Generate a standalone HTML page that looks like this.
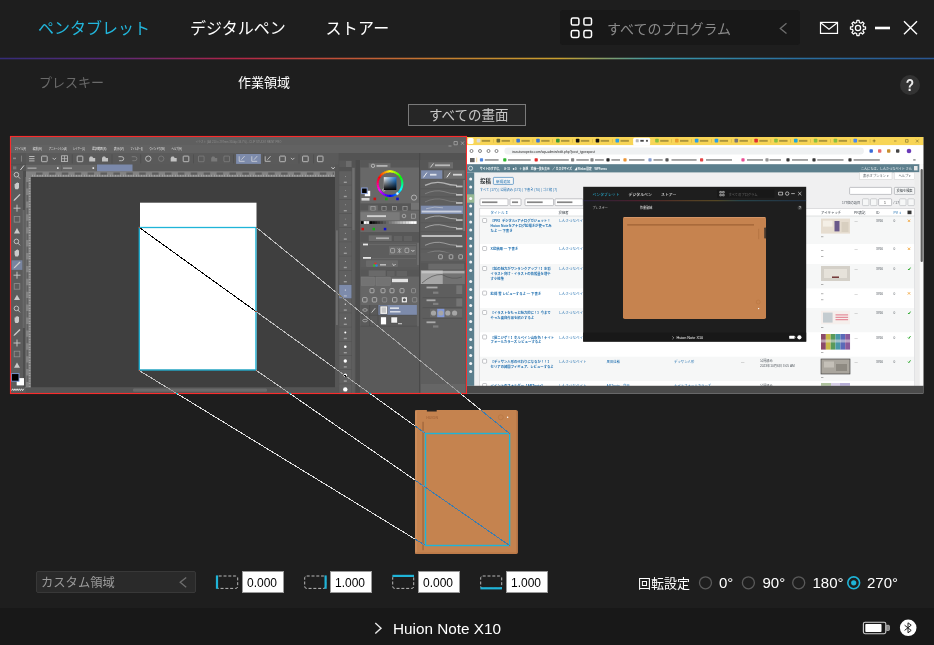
<!DOCTYPE html>
<html lang="ja"><head><meta charset="utf-8"><title>Huion</title>
<style>
*{box-sizing:border-box;margin:0;padding:0}
html,body{width:934px;height:645px;overflow:hidden;background:#1e1e1e}
body{position:relative;font-family:"Liberation Sans","Noto Sans CJK JP",sans-serif;color:#fff}
.abs{position:absolute}
.t{position:absolute;white-space:nowrap;line-height:1}
#grad{left:0;top:58px;width:934px;height:1px;background:linear-gradient(90deg,#352c78 0%,#5a2a78 12%,#b02448 25%,#c05038 36%,#c48030 48%,#c8a030 60%,#3a98a8 70%,#2a70a0 85%,#2a5590 100%)}
#grad2{left:0;top:57px;width:934px;height:3px;opacity:.28;background:linear-gradient(90deg,#352c78 0%,#5a2a78 12%,#b02448 25%,#c05038 36%,#c48030 48%,#c8a030 60%,#3a98a8 70%,#2a70a0 85%,#2a5590 100%)}
#prog{left:560px;top:10px;width:240px;height:35px;background:#181818;border-radius:3px}
#foot{left:0;top:608px;width:934px;height:37px;background:#181818}
.inp{position:absolute;top:571px;width:42px;height:22px;background:#fff;border:1px solid #9a9a9a;color:#000;font-size:12px;line-height:23px;text-align:center;padding-right:2px}
</style></head><body>
<svg class="abs" style="left:0;top:0" width="934" height="645" viewBox="0 0 934 645" font-family="Liberation Sans, Noto Sans CJK JP, sans-serif">
<rect x="10" y="136" width="457" height="258" fill="#5b5b5b" />
<rect x="11" y="137" width="455" height="8" fill="#5f5f5f" />
<rect x="11" y="145" width="455" height="8" fill="#626262" />
<rect x="11" y="153" width="455" height="11.5" fill="#5a5a5a" />
<rect x="11" y="153" width="15" height="18" fill="#565656" />
<rect x="21.2" y="155.6" width="0.8" height="6" fill="#8a8a8a" />
<rect x="13" y="157.6" width="3" height="1.6" fill="#888" />
<path d="M11 164.4 H26" stroke="#4c4c4c" stroke-width=".5"/>
<path d="M20.4 170 l3.6 -4.6" stroke="#e0e0e0" stroke-width=".9"/>
<rect x="13" y="166.4" width="3.4" height="3" fill="#777" />
<rect x="11" y="171" width="12" height="216" fill="#5c5c5c" />
<rect x="23" y="171" width="3" height="216" fill="#4e4e4e" />
<rect x="26" y="164.5" width="309" height="7" fill="#595959" />
<rect x="26" y="164.8" width="35" height="6.5" fill="#666" />
<rect x="61.6" y="164.8" width="35" height="6.5" fill="#666" />
<rect x="27.5" y="167.4" width="9" height="1.6" fill="#ddd" opacity=".45"/>
<rect x="63" y="167.4" width="9" height="1.6" fill="#ddd" opacity=".45"/>
<rect x="98.5" y="167.4" width="9" height="1.6" fill="#ddd" opacity=".45"/>
<rect x="57" y="167.2" width="1.6" height="1.8" fill="#fff" opacity=".8"/>
<rect x="92.5" y="167.2" width="1.6" height="1.8" fill="#fff" opacity=".8"/>
<rect x="128" y="167.2" width="1.6" height="1.8" fill="#fff" opacity=".8"/>
<path d="M331.5 167.2 l1.6 1.7 l1.6 -1.7" stroke="#eee" stroke-width=".8" fill="none"/>
<rect x="97" y="164.5" width="35.5" height="7" fill="#7b89ab" />
<rect x="26" y="171.3" width="309" height="5.7" fill="#828282" />
<rect x="25.6" y="177" width="5.2" height="211" fill="#828282" />
<rect x="31" y="177" width="304" height="210.5" fill="#3f3f3f" />
<rect x="335" y="164.5" width="3.6" height="229" fill="#565656" />
<rect x="336" y="230.4" width="1.9" height="94.6" fill="#6e6e6e" />
<rect x="26" y="387.5" width="313" height="5.5" fill="#555" />
<rect x="133" y="388.5" width="134" height="3.2" fill="#6a6a6a" rx="1.2"/>
<rect x="140" y="202.7" width="116.5" height="167" fill="#ffffff" />
<rect x="338.6" y="153" width="128" height="7" fill="#535353" />
<rect x="338.6" y="160" width="17" height="233" fill="#535353" />
<rect x="339.2" y="160.5" width="12.3" height="6.5" fill="#5a5a5a" />
<rect x="346" y="161" width="5.5" height="6" fill="#6c6c6c" />
<rect x="352" y="167.5" width="2.9" height="226" fill="#5e5e5e" />
<rect x="352.3" y="168" width="2.3" height="62" fill="#707070" />
<rect x="339.2" y="171.2" width="12.3" height="13.6" fill="#606060" />
<rect x="343.8" y="181.6" width="3" height="1.4" fill="#e8e8e8" opacity=".45"/>
<circle cx="345.3" cy="176.4" r="0.3" fill="#ffffff"/>
<rect x="339.2" y="185.4" width="12.3" height="13.6" fill="#606060" />
<rect x="343.8" y="195.8" width="3" height="1.4" fill="#e8e8e8" opacity=".45"/>
<circle cx="345.3" cy="190.6" r="0.3" fill="#ffffff"/>
<rect x="339.2" y="199.6" width="12.3" height="13.6" fill="#606060" />
<rect x="343.8" y="210" width="3" height="1.4" fill="#e8e8e8" opacity=".45"/>
<circle cx="345.3" cy="204.8" r="0.35" fill="#ffffff"/>
<rect x="339.2" y="213.8" width="12.3" height="13.6" fill="#606060" />
<rect x="343.8" y="224.2" width="3" height="1.4" fill="#e8e8e8" opacity=".45"/>
<circle cx="345.3" cy="219" r="0.35" fill="#ffffff"/>
<rect x="339.2" y="228" width="12.3" height="13.6" fill="#606060" />
<rect x="343.8" y="238.4" width="3" height="1.4" fill="#e8e8e8" opacity=".45"/>
<circle cx="345.3" cy="233.2" r="0.4" fill="#ffffff"/>
<rect x="339.2" y="242.2" width="12.3" height="13.6" fill="#606060" />
<rect x="343.8" y="252.6" width="3" height="1.4" fill="#e8e8e8" opacity=".45"/>
<circle cx="345.3" cy="247.4" r="0.4" fill="#ffffff"/>
<rect x="339.2" y="256.4" width="12.3" height="13.6" fill="#606060" />
<rect x="343.8" y="266.8" width="3" height="1.4" fill="#e8e8e8" opacity=".45"/>
<circle cx="345.3" cy="261.6" r="0.45" fill="#ffffff"/>
<rect x="339.2" y="270.6" width="12.3" height="13.6" fill="#606060" />
<rect x="343.8" y="281" width="3" height="1.4" fill="#e8e8e8" opacity=".45"/>
<circle cx="345.3" cy="275.8" r="0.5" fill="#ffffff"/>
<rect x="339.2" y="284.8" width="12.3" height="13.6" fill="#7d8bab" />
<rect x="343.8" y="295.2" width="3" height="1.4" fill="#e8e8e8" opacity=".45"/>
<circle cx="345.3" cy="290" r="0.55" fill="#ffffff"/>
<rect x="339.2" y="299" width="12.3" height="13.6" fill="#606060" />
<rect x="343.8" y="309.4" width="3" height="1.4" fill="#e8e8e8" opacity=".45"/>
<circle cx="345.3" cy="304.2" r="0.6" fill="#ffffff"/>
<rect x="339.2" y="313.2" width="12.3" height="13.6" fill="#606060" />
<rect x="343.8" y="323.6" width="3" height="1.4" fill="#e8e8e8" opacity=".45"/>
<circle cx="345.3" cy="318.4" r="0.8" fill="#ffffff"/>
<rect x="339.2" y="327.4" width="12.3" height="13.6" fill="#606060" />
<rect x="343.8" y="337.8" width="3" height="1.4" fill="#e8e8e8" opacity=".45"/>
<circle cx="345.3" cy="332.6" r="1" fill="#ffffff"/>
<rect x="339.2" y="341.6" width="12.3" height="13.6" fill="#606060" />
<rect x="343.8" y="352" width="3" height="1.4" fill="#e8e8e8" opacity=".45"/>
<circle cx="345.3" cy="346.8" r="1.3" fill="#ffffff"/>
<rect x="339.2" y="355.8" width="12.3" height="13.6" fill="#606060" />
<rect x="343.8" y="366.2" width="3" height="1.4" fill="#e8e8e8" opacity=".45"/>
<circle cx="345.3" cy="361" r="1.7" fill="#ffffff"/>
<rect x="339.2" y="370" width="12.3" height="13.6" fill="#606060" />
<rect x="343.8" y="380.4" width="3" height="1.4" fill="#e8e8e8" opacity=".45"/>
<circle cx="345.3" cy="375.2" r="1.7" fill="#ffffff"/>
<rect x="339.2" y="384.2" width="12.3" height="8.6" fill="#606060" />
<circle cx="345.3" cy="389.4" r="2.2" fill="#ffffff"/>
<rect x="355.5" y="160" width="4.5" height="233" fill="#4c4c4c" />
<rect x="360" y="160" width="59" height="233" fill="#5a5a5a" />
<rect x="419" y="153" width="1.3" height="240" fill="#4a4a4a" />
<rect x="420.3" y="160" width="45.7" height="233" fill="#5a5a5a" />
<rect x="360.5" y="167" width="58.5" height="36.6" fill="#686868" />
<rect x="360.5" y="160" width="58.5" height="7.5" fill="#575757" />
<rect x="368.7" y="163.2" width="21.8" height="5.2" fill="#6c6c6c" />
<rect x="376.5" y="165" width="11" height="1.8" fill="#eee" opacity=".55"/>
<circle cx="373" cy="165.8" r="1.7" fill="none" stroke="#e0e0e0" stroke-width=".6"/>
<g transform="translate(390,183.6)">
<path d="M-11.24 -5.00 A12.3 12.3 0 0 1 -9.95 -7.23" stroke="#ff0000" stroke-width="2.1" fill="none"/>
<path d="M-10.20 -6.88 A12.3 12.3 0 0 1 -8.54 -8.85" stroke="#ff2a00" stroke-width="2.1" fill="none"/>
<path d="M-8.85 -8.54 A12.3 12.3 0 0 1 -6.88 -10.20" stroke="#ff5400" stroke-width="2.1" fill="none"/>
<path d="M-7.23 -9.95 A12.3 12.3 0 0 1 -5.00 -11.24" stroke="#ff7f00" stroke-width="2.1" fill="none"/>
<path d="M-5.39 -11.06 A12.3 12.3 0 0 1 -2.98 -11.93" stroke="#ffaa00" stroke-width="2.1" fill="none"/>
<path d="M-3.39 -11.82 A12.3 12.3 0 0 1 -0.86 -12.27" stroke="#ffd400" stroke-width="2.1" fill="none"/>
<path d="M-1.29 -12.23 A12.3 12.3 0 0 1 1.29 -12.23" stroke="#ffff00" stroke-width="2.1" fill="none"/>
<path d="M0.86 -12.27 A12.3 12.3 0 0 1 3.39 -11.82" stroke="#d4ff00" stroke-width="2.1" fill="none"/>
<path d="M2.98 -11.93 A12.3 12.3 0 0 1 5.39 -11.06" stroke="#aaff00" stroke-width="2.1" fill="none"/>
<path d="M5.00 -11.24 A12.3 12.3 0 0 1 7.23 -9.95" stroke="#7fff00" stroke-width="2.1" fill="none"/>
<path d="M6.88 -10.20 A12.3 12.3 0 0 1 8.85 -8.54" stroke="#54ff00" stroke-width="2.1" fill="none"/>
<path d="M8.54 -8.85 A12.3 12.3 0 0 1 10.20 -6.88" stroke="#2aff00" stroke-width="2.1" fill="none"/>
<path d="M9.95 -7.23 A12.3 12.3 0 0 1 11.24 -5.00" stroke="#00ff00" stroke-width="2.1" fill="none"/>
<path d="M11.06 -5.39 A12.3 12.3 0 0 1 11.93 -2.98" stroke="#00ff2a" stroke-width="2.1" fill="none"/>
<path d="M11.82 -3.39 A12.3 12.3 0 0 1 12.27 -0.86" stroke="#00ff55" stroke-width="2.1" fill="none"/>
<path d="M12.23 -1.29 A12.3 12.3 0 0 1 12.23 1.29" stroke="#00ff7f" stroke-width="2.1" fill="none"/>
<path d="M12.27 0.86 A12.3 12.3 0 0 1 11.82 3.39" stroke="#00ffa9" stroke-width="2.1" fill="none"/>
<path d="M11.93 2.98 A12.3 12.3 0 0 1 11.06 5.39" stroke="#00ffd4" stroke-width="2.1" fill="none"/>
<path d="M11.24 5.00 A12.3 12.3 0 0 1 9.95 7.23" stroke="#00ffff" stroke-width="2.1" fill="none"/>
<path d="M10.20 6.88 A12.3 12.3 0 0 1 8.54 8.85" stroke="#00d4ff" stroke-width="2.1" fill="none"/>
<path d="M8.85 8.54 A12.3 12.3 0 0 1 6.88 10.20" stroke="#00a9ff" stroke-width="2.1" fill="none"/>
<path d="M7.23 9.95 A12.3 12.3 0 0 1 5.00 11.24" stroke="#007fff" stroke-width="2.1" fill="none"/>
<path d="M5.39 11.06 A12.3 12.3 0 0 1 2.98 11.93" stroke="#0054ff" stroke-width="2.1" fill="none"/>
<path d="M3.39 11.82 A12.3 12.3 0 0 1 0.86 12.27" stroke="#002aff" stroke-width="2.1" fill="none"/>
<path d="M1.29 12.23 A12.3 12.3 0 0 1 -1.29 12.23" stroke="#0000ff" stroke-width="2.1" fill="none"/>
<path d="M-0.86 12.27 A12.3 12.3 0 0 1 -3.39 11.82" stroke="#2a00ff" stroke-width="2.1" fill="none"/>
<path d="M-2.98 11.93 A12.3 12.3 0 0 1 -5.39 11.06" stroke="#5400ff" stroke-width="2.1" fill="none"/>
<path d="M-5.00 11.24 A12.3 12.3 0 0 1 -7.23 9.95" stroke="#7f00ff" stroke-width="2.1" fill="none"/>
<path d="M-6.88 10.20 A12.3 12.3 0 0 1 -8.85 8.54" stroke="#aa00ff" stroke-width="2.1" fill="none"/>
<path d="M-8.54 8.85 A12.3 12.3 0 0 1 -10.20 6.88" stroke="#d400ff" stroke-width="2.1" fill="none"/>
<path d="M-9.95 7.23 A12.3 12.3 0 0 1 -11.24 5.00" stroke="#ff00ff" stroke-width="2.1" fill="none"/>
<path d="M-11.06 5.39 A12.3 12.3 0 0 1 -11.93 2.98" stroke="#ff00d4" stroke-width="2.1" fill="none"/>
<path d="M-11.82 3.39 A12.3 12.3 0 0 1 -12.27 0.86" stroke="#ff00aa" stroke-width="2.1" fill="none"/>
<path d="M-12.23 1.29 A12.3 12.3 0 0 1 -12.23 -1.29" stroke="#ff007f" stroke-width="2.1" fill="none"/>
<path d="M-12.27 -0.86 A12.3 12.3 0 0 1 -11.82 -3.39" stroke="#ff0055" stroke-width="2.1" fill="none"/>
<path d="M-11.93 -2.98 A12.3 12.3 0 0 1 -11.06 -5.39" stroke="#ff002a" stroke-width="2.1" fill="none"/>
<circle cx="-6.2" cy="6.4" r="1.2" fill="none" stroke="#eee" stroke-width=".5"/><circle cx="7.4" cy="10" r="1.1" fill="#dff" stroke="#fff" stroke-width=".4"/>
</g>
<defs><linearGradient id="cg1" x1="0" x2="1" y1="0" y2="0"><stop offset="0" stop-color="#fff"/><stop offset="1" stop-color="#1a7fe0"/></linearGradient><linearGradient id="cg2" x1="0" x2="0" y1="0" y2="1"><stop offset="0" stop-color="#000" stop-opacity="0"/><stop offset="1" stop-color="#000"/></linearGradient></defs>
<rect x="383.8" y="177.2" width="12.6" height="12.8" fill="url(#cg1)" />
<rect x="383.8" y="177.2" width="12.6" height="12.8" fill="url(#cg2)" />
<rect x="364.8" y="190.8" width="5.4" height="5.4" fill="#fff" />
<rect x="361.6" y="188" width="5.6" height="5.6" fill="#000" stroke="#8aa0d8" stroke-width="1"/>
<rect x="361.5" y="198" width="8" height="2.6" fill="#d8d8d8" />
<rect x="373.5" y="197.6" width="2.6" height="2.6" fill="#d01010" />
<rect x="385" y="197.6" width="2.6" height="2.6" fill="#10b010" />
<rect x="396.2" y="197.6" width="2.6" height="2.6" fill="#1010d0" />
<circle cx="414" cy="197.6" r="2.6" fill="none" stroke="#ccc" stroke-width=".7"/>
<rect x="360.5" y="203.6" width="58.5" height="8.4" fill="#575757" />
<rect x="411" y="202.8" width="8" height="7" fill="#747474" />
<rect x="368.3" y="205.4" width="9.5" height="6.4" fill="#6c6c6c" />
<rect x="370.9" y="206.6" width="4.2" height="3.8" fill="none" stroke="#c0c0c0" stroke-width=".6" opacity=".8"/>
<rect x="381.9" y="206.6" width="4.2" height="3.8" fill="none" stroke="#c0c0c0" stroke-width=".6" opacity=".8"/>
<rect x="392.4" y="206.6" width="4.2" height="3.8" fill="none" stroke="#c0c0c0" stroke-width=".6" opacity=".8"/>
<rect x="402.9" y="206.6" width="4.2" height="3.8" fill="none" stroke="#c0c0c0" stroke-width=".6" opacity=".8"/>
<rect x="360.5" y="210.5" width="58.5" height="21.5" fill="#686868" />
<rect x="360.5" y="212.2" width="39.2" height="8" fill="#7a7a7a" />
<rect x="367" y="215.2" width="19" height="1.9" fill="#fff" opacity=".65"/>
<circle cx="404" cy="216" r="1.8" fill="none" stroke="#c8c8c8" stroke-width=".6"/>
<rect x="411.5" y="214" width="4" height="4.2" fill="none" stroke="#b0b0b0" stroke-width=".6"/>
<rect x="361" y="221.2" width="2.8" height="2.7" fill="#000" />
<rect x="363.78" y="221.2" width="2.8" height="2.7" fill="#fff" />
<rect x="366.56" y="221.2" width="2.8" height="2.7" fill="#eee" />
<rect x="369.34" y="221.2" width="2.8" height="2.7" fill="#000" />
<rect x="372.12" y="221.2" width="2.8" height="2.7" fill="#111" />
<rect x="374.9" y="221.2" width="2.8" height="2.7" fill="#222" />
<rect x="377.68" y="221.2" width="2.8" height="2.7" fill="#333" />
<rect x="380.46" y="221.2" width="2.8" height="2.7" fill="#444" />
<rect x="383.24" y="221.2" width="2.8" height="2.7" fill="#555" />
<rect x="386.02" y="221.2" width="2.8" height="2.7" fill="#666" />
<rect x="388.8" y="221.2" width="2.8" height="2.7" fill="#777" />
<rect x="391.58" y="221.2" width="2.8" height="2.7" fill="#888" />
<rect x="394.36" y="221.2" width="2.8" height="2.7" fill="#999" />
<rect x="397.14" y="221.2" width="2.8" height="2.7" fill="#aaa" />
<rect x="399.92" y="221.2" width="2.8" height="2.7" fill="#bbb" />
<rect x="402.7" y="221.2" width="2.8" height="2.7" fill="#ccc" />
<rect x="405.48" y="221.2" width="2.8" height="2.7" fill="#ddd" />
<rect x="408.26" y="221.2" width="2.8" height="2.7" fill="#eee" />
<rect x="411.04" y="221.2" width="2.8" height="2.7" fill="#fff" />
<rect x="413.82" y="221.2" width="2.8" height="2.7" fill="#fff" />
<rect x="361.5" y="227.8" width="2.5" height="2.5" fill="#d01010" />
<rect x="372.5" y="227.8" width="2.5" height="2.5" fill="#10b010" />
<rect x="383.8" y="227.8" width="2.5" height="2.5" fill="#1010d0" />
<rect x="360.5" y="232" width="58.5" height="10" fill="#575757" />
<rect x="368.7" y="235.4" width="23" height="5.6" fill="#6c6c6c" />
<rect x="376" y="237.4" width="13" height="1.7" fill="#eee" opacity=".5"/>
<rect x="394" y="236" width="8" height="5" fill="#626262" />
<rect x="404" y="236" width="8" height="5" fill="#626262" />
<rect x="360.5" y="242" width="58.5" height="25" fill="#5d5d5d" />
<rect x="363" y="243.6" width="5" height="1.8" fill="#fff" opacity=".85"/>
<rect x="369" y="244.6" width="47" height="0.4" fill="#7a7a7a" />
<rect x="389" y="246.2" width="27" height="8.8" fill="#6c6c6c" />
<rect x="390.6" y="248.4" width="4" height="4.4" rx=".9" fill="none" stroke="#bdbdbd" stroke-width=".7"/><path d="M397.6 248.4 l3.6 4.4 m0 -4.4 l-3.6 4.4 M399.4 248 v5.2" stroke="#bdbdbd" stroke-width=".6"/><rect x="405" y="248.2" width="3.8" height="4.4" rx="1" fill="none" stroke="#bdbdbd" stroke-width=".7"/><path d="M411.4 250 l1.5 1.5 l1.5 -1.5" stroke="#e8e8e8" stroke-width=".8" fill="none"/>
<rect x="363" y="257" width="8" height="1.8" fill="#fff" opacity=".85"/>
<rect x="372" y="258" width="44" height="0.4" fill="#7a7a7a" />
<rect x="366" y="260.2" width="32" height="6.8" fill="#6a6a6a" rx="1"/>
<circle cx="375.4" cy="263.6" r="1.2" fill="#e03030"/><circle cx="374.3" cy="265.5" r="1.2" fill="#30c030"/><circle cx="376.5" cy="265.5" r="1.2" fill="#3080e0"/>
<rect x="380" y="264" width="6" height="1.6" fill="#ddd" opacity=".7"/>
<path d="M392.4 264 l1.6 1.6 l1.6 -1.6" stroke="#eee" stroke-width=".8" fill="none"/>
<rect x="417.2" y="243" width="1.6" height="22" fill="#727272" />
<rect x="360.5" y="269.6" width="58.5" height="7" fill="#575757" />
<rect x="368.7" y="270.4" width="17" height="5.6" fill="#6a6a6a" />
<rect x="387" y="271" width="7.6" height="5" fill="#626262" />
<rect x="396.5" y="271" width="10.5" height="5" fill="#626262" />
<rect x="360.5" y="276.6" width="58.5" height="49.6" fill="#666666" />
<rect x="361.3" y="277" width="13.2" height="8.6" fill="#737373" stroke="#808080" stroke-width=".4"/>
<rect x="376" y="277" width="14.4" height="8.6" fill="#737373" stroke="#808080" stroke-width=".4"/>
<rect x="392" y="278.8" width="16" height="3.4" fill="#e2e2e2" />
<rect x="370" y="288.6" width="4" height="4.2" rx=".8" fill="none" stroke="#c4c4c4" stroke-width=".8" opacity="0.9"/>
<rect x="381" y="288.6" width="4" height="4.2" rx=".8" fill="none" stroke="#c4c4c4" stroke-width=".8" opacity="0.9"/>
<rect x="390" y="288.6" width="4" height="4.2" rx=".8" fill="none" stroke="#c4c4c4" stroke-width=".8" opacity="0.9"/>
<rect x="400" y="288.6" width="4" height="4.2" rx=".8" fill="none" stroke="#c4c4c4" stroke-width=".8" opacity="0.9"/>
<rect x="411.5" y="288.6" width="4" height="4.2" rx=".8" fill="none" stroke="#c4c4c4" stroke-width=".8" opacity="0.5"/>
<rect x="362.6" y="297.6" width="4.4" height="4.4" rx=".8" fill="none" stroke="#c4c4c4" stroke-width=".8" opacity="0.9"/>
<rect x="372.3" y="297.6" width="4.4" height="4.4" rx=".8" fill="none" stroke="#c4c4c4" stroke-width=".8" opacity="0.9"/>
<rect x="382.3" y="297.6" width="4.4" height="4.4" rx=".8" fill="none" stroke="#c4c4c4" stroke-width=".8" opacity="0.45"/>
<rect x="392.5" y="297.6" width="4.4" height="4.4" rx=".8" fill="none" stroke="#c4c4c4" stroke-width=".8" opacity="0.9"/>
<rect x="401.8" y="297.2" width="5.2" height="5.2" fill="#e8e8e8" />
<circle cx="404.4" cy="299.8" r="1.5" fill="#555"/>
<rect x="412.4" y="297.6" width="4.4" height="4.4" rx=".8" fill="none" stroke="#c4c4c4" stroke-width=".8" opacity="0.45"/>
<rect x="360.5" y="305" width="56.4" height="21.2" fill="#5a5a5a" />
<rect x="378.2" y="305" width="38.7" height="10.1" fill="#7d8bab" />
<rect x="380" y="306" width="7.6" height="8.2" fill="#f2f2f2" stroke="#333" stroke-width=".5"/>
<rect x="381.6" y="307.4" width="4.4" height="5.4" fill="#c8c8c8" />
<rect x="390" y="307.4" width="9" height="1.5" fill="#fff" opacity=".8"/>
<rect x="390" y="311" width="10.5" height="1.5" fill="#fff" opacity=".7"/>
<rect x="380.9" y="317.2" width="5.2" height="7.2" fill="#ffffff" />
<rect x="391" y="317" width="6.4" height="6" fill="#f2f2f2" stroke="#444" stroke-width=".5"/>
<rect x="398" y="323" width="4" height="1.3" fill="#ddd" opacity=".7"/>
<path d="M360.5 315.2 H416.9 M360.5 326.2 H416.9 M369.6 305 V326 M378 305 V326" stroke="#484848" stroke-width=".5"/>
<ellipse cx="365" cy="310" rx="2.3" ry="1.3" fill="none" stroke="#c8c8c8" stroke-width=".6"/>
<ellipse cx="365" cy="320.6" rx="2.3" ry="1.3" fill="none" stroke="#c8c8c8" stroke-width=".6"/>
<path d="M371.6 312.6 l3.6 -4.4" stroke="#ddd" stroke-width=".8"/>
<rect x="420.3" y="160" width="45.7" height="10" fill="#575757" />
<rect x="428.4" y="162.2" width="24.6" height="6.2" fill="#6c6c6c" />
<rect x="435" y="164.4" width="15" height="1.8" fill="#eee" opacity=".6"/>
<path d="M430.5 167.4 l3 -4" stroke="#e4e4e4" stroke-width=".8"/>
<rect x="421.1" y="170.3" width="21.2" height="8.5" fill="#7d8bab" />
<rect x="443.9" y="170.3" width="20.8" height="8.5" fill="#6e6e6e" />
<path d="M423.5 177.4 l3.4 -4.8 M446.8 177.4 l3.4 -4.8" stroke="#f0f0f0" stroke-width="1"/>
<rect x="430" y="173.8" width="6.5" height="1.8" fill="#fff" opacity=".75"/>
<rect x="453" y="173.8" width="9" height="1.8" fill="#fff" opacity=".7"/>
<rect x="420.8" y="179.6" width="44.2" height="78" fill="#5e5e5e" />
<path d="M425 185.4 q10 -4.6 19 -2.2 q6 2.2 13 2.2" stroke="#ececec" stroke-width="1.3" fill="none" opacity="0.6"/>
<rect x="456" y="185.6" width="6.5" height="1.7" fill="#fff" opacity=".6"/>
<path d="M420.8 188.8 H463" stroke="#525252" stroke-width=".5"/>
<path d="M425 193.8 q10 -4.6 19 -2.2 q6 2.2 13 2.2" stroke="#ececec" stroke-width="0.6" fill="none" opacity="0.4"/>
<rect x="456" y="194" width="6.5" height="1.7" fill="#fff" opacity=".6"/>
<path d="M420.8 196.9 H463" stroke="#525252" stroke-width=".5"/>
<path d="M425 201.9 q10 -4.6 19 -2.2 q6 2.2 13 2.2" stroke="#ececec" stroke-width="0.5" fill="none" opacity="0.35"/>
<rect x="456" y="202.1" width="6.5" height="1.7" fill="#fff" opacity=".6"/>
<path d="M420.8 205.6 H463" stroke="#525252" stroke-width=".5"/>
<rect x="420.8" y="205.6" width="42.4" height="8.4" fill="#7d8bab" />
<rect x="421.6" y="210.6" width="40" height="1.9" fill="#fff" opacity=".6"/>
<path d="M426 208.8 q9 -3 17 -1" stroke="#e8e8e8" stroke-width=".7" fill="none" opacity=".6"/>
<path d="M425 219 q10 -4.6 19 -2.2 q6 2.2 13 2.2" stroke="#ececec" stroke-width="0.9" fill="none" opacity="0.55"/>
<rect x="456" y="219.2" width="6.5" height="1.7" fill="#fff" opacity=".6"/>
<path d="M420.8 222.7 H463" stroke="#525252" stroke-width=".5"/>
<path d="M425 227.7 q10 -4.6 19 -2.2 q6 2.2 13 2.2" stroke="#ececec" stroke-width="0.9" fill="none" opacity="0.55"/>
<rect x="456" y="227.9" width="6.5" height="1.7" fill="#fff" opacity=".6"/>
<path d="M420.8 231.8 H463" stroke="#525252" stroke-width=".5"/>
<rect x="421.6" y="235" width="40.5" height="2" fill="#fff" opacity=".6"/>
<path d="M425 245.3 q10 -4.6 19 -2.2 q6 2.2 13 2.2" stroke="#ececec" stroke-width="0.8" fill="none" opacity="0.55"/>
<rect x="456" y="245.5" width="6.5" height="1.7" fill="#fff" opacity=".6"/>
<path d="M420.8 249 H463" stroke="#525252" stroke-width=".5"/>
<path d="M425 254 q10 -4.6 19 -2.2 q6 2.2 13 2.2" stroke="#ececec" stroke-width="0.6" fill="none" opacity="0.4"/>
<rect x="456" y="254.2" width="6.5" height="1.7" fill="#fff" opacity=".6"/>
<path d="M420.8 257.4 H463" stroke="#525252" stroke-width=".5"/>
<rect x="463.4" y="180" width="1.5" height="51" fill="#808080" />
<rect x="420.8" y="252.6" width="44.2" height="8.4" fill="#606060" />
<rect x="438.7" y="254.8" width="3.6" height="4" rx=".6" fill="none" stroke="#c8c8c8" stroke-width=".7"/>
<rect x="449.2" y="254.8" width="3.6" height="4" rx=".6" fill="none" stroke="#c8c8c8" stroke-width=".7"/>
<rect x="458.8" y="254.8" width="3.6" height="4" rx=".6" fill="none" stroke="#c8c8c8" stroke-width=".7"/>
<rect x="420.3" y="263" width="45.7" height="7" fill="#575757" />
<rect x="420.8" y="284" width="44.5" height="100" fill="#5e5e5e" />
<rect x="420.8" y="270.3" width="22.1" height="13.7" fill="#a6a6a6" />
<rect x="442.9" y="270.3" width="22" height="13.7" fill="#727272" />
<rect x="421.5" y="271" width="43" height="2.4" fill="#d8d8d8" opacity=".55"/>
<path d="M422 283 q10 -9 20 -8.5 q10 6 20 2.5" stroke="#555" stroke-width=".7" fill="none"/>
<rect x="428.3" y="263.6" width="36" height="6" fill="#6a6a6a" />
<rect x="456.3" y="285.4" width="5.9" height="8.6" fill="#747474" />
<rect x="456.3" y="298.4" width="5.9" height="8" fill="#747474" />
<path d="M422.5 297.6 H462.5" stroke="#4c4c4c" stroke-width=".5"/>
<path d="M422.5 307.6 H462.5" stroke="#4c4c4c" stroke-width=".5"/>
<path d="M422.5 318.4 H462.5" stroke="#4c4c4c" stroke-width=".5"/>
<rect x="426.5" y="286.6" width="11" height="1.8" fill="#e0e0e0" opacity=".6"/>
<rect x="426.5" y="299.4" width="9" height="1.8" fill="#e0e0e0" opacity=".6"/>
<rect x="426.5" y="321.4" width="9" height="1.8" fill="#e0e0e0" opacity=".6"/>
<rect x="433" y="291.6" width="5.4" height="2.2" fill="#808080" />
<rect x="433" y="302.8" width="5.4" height="2.2" fill="#808080" />
<rect x="433" y="325.4" width="5.4" height="2.2" fill="#808080" />
<rect x="430" y="308.8" width="32" height="8.4" fill="#6a6a6a" />
<rect x="437.2" y="308.8" width="7.2" height="8.4" fill="#8298d8" />
<circle cx="433.5" cy="313" r="2.6" fill="#a6a6a6"/>
<circle cx="440.8" cy="313" r="2.6" fill="#a6a6a6"/>
<circle cx="447.8" cy="313" r="2.6" fill="#a6a6a6"/>
<circle cx="454.6" cy="313" r="2.6" fill="#a6a6a6"/>
<rect x="420.8" y="384" width="44.5" height="9" fill="#666666" />
<text x="14.4" y="150.1" font-size="3.6" fill="#e6e6e6" textLength="11.6" lengthAdjust="spacingAndGlyphs">ファイル(F)</text>
<text x="32.7" y="150.1" font-size="3.6" fill="#e6e6e6" textLength="9.3" lengthAdjust="spacingAndGlyphs">編集(E)</text>
<text x="49" y="150.1" font-size="3.6" fill="#e6e6e6" textLength="17.7" lengthAdjust="spacingAndGlyphs">アニメーション(A)</text>
<text x="73" y="150.1" font-size="3.6" fill="#e6e6e6" textLength="12" lengthAdjust="spacingAndGlyphs">レイヤー(L)</text>
<text x="92" y="150.1" font-size="3.6" fill="#e6e6e6" textLength="14.4" lengthAdjust="spacingAndGlyphs">選択範囲(S)</text>
<text x="113.7" y="150.1" font-size="3.6" fill="#e6e6e6" textLength="10.1" lengthAdjust="spacingAndGlyphs">表示(V)</text>
<text x="130.6" y="150.1" font-size="3.6" fill="#e6e6e6" textLength="12.3" lengthAdjust="spacingAndGlyphs">フィルター(I)</text>
<text x="149.4" y="150.1" font-size="3.6" fill="#e6e6e6" textLength="15.4" lengthAdjust="spacingAndGlyphs">ウィンドウ(W)</text>
<text x="171.4" y="150.1" font-size="3.6" fill="#e6e6e6" textLength="10.3" lengthAdjust="spacingAndGlyphs">ヘルプ(H)</text>
<text x="195.4" y="142.6" font-size="3" fill="#8c8c8c" textLength="86" lengthAdjust="spacingAndGlyphs">イラスト (A4 210 x 297mm 350dpi 34.7%) - CLIP STUDIO PAINT PRO</text>
<rect x="236.1" y="154" width="24.8" height="9.9" fill="#7d8bab" />
<g opacity=".8">
<path d="M29.1 156.5 h5.4 M29.1 158.7 h5.4 M29.1 160.9 h5.4" stroke="#e0e0e0" stroke-width=".9"/>
<rect x="41.6" y="156.1" width="5.6" height="5.6" rx=".6" fill="none" stroke="#dcdcdc" stroke-width=".9" opacity="1"/>
<path d="M52.6 157.9 l1.7 1.7 l1.7 -1.7" stroke="#e8e8e8" stroke-width=".9" fill="none"/>
<rect x="61.6" y="155.8" width="5.8" height="5.8" fill="none" stroke="#dcdcdc" stroke-width=".8"/><path d="M64.5 155.8 v5.8 M61.6 158.7 h5.8" stroke="#dcdcdc" stroke-width=".7"/>
<rect x="77.2" y="156.1" width="5.6" height="5.6" rx=".6" fill="none" stroke="#dcdcdc" stroke-width=".9" opacity="1"/>
<path d="M89.2 161.5 h6 v-3.4 h-2 l-1 -1.6 h-2 l-1 1.6z" fill="#dcdcdc" opacity="1"/>
<path d="M102 161.5 h6 v-3.4 h-2 l-1 -1.6 h-2 l-1 1.6z" fill="#dcdcdc" opacity="1"/>
<path d="M118.5 156.7 h3.2 a2 2 0 0 1 0 4 h-2.6" stroke="#dcdcdc" stroke-width=".9" fill="none" opacity="1"/>
<path d="M131.7 156.7 h3.2 a2 2 0 0 1 0 4 h-2.6" stroke="#dcdcdc" stroke-width=".9" fill="none" opacity="0.35"/>
<circle cx="148.3" cy="158.7" r="2.7" fill="none" stroke="#dcdcdc" stroke-width=".9" opacity="1"/>
<circle cx="161.2" cy="158.7" r="2.7" fill="none" stroke="#dcdcdc" stroke-width=".9" opacity="0.3"/>
<path d="M170.7 161.5 h6 v-3.4 h-2 l-1 -1.6 h-2 l-1 1.6z" fill="#dcdcdc" opacity="1"/>
<rect x="183.2" y="156.1" width="5.6" height="5.6" rx=".6" fill="none" stroke="#dcdcdc" stroke-width=".9" opacity="1"/>
<rect x="198.5" y="156.1" width="5.6" height="5.6" rx=".6" fill="none" stroke="#dcdcdc" stroke-width=".9" opacity="0.3"/>
<path d="M211.2 161.5 h6 v-3.4 h-2 l-1 -1.6 h-2 l-1 1.6z" fill="#dcdcdc" opacity="0.3"/>
<rect x="223.9" y="156.1" width="5.6" height="5.6" rx=".6" fill="none" stroke="#dcdcdc" stroke-width=".9" opacity="0.3"/>
<path d="M239.2 156.3 v5 h5.4 M241.4 159.7 l3.2 -3.6" stroke="#e8e8e8" stroke-width=".8" fill="none"/>
<path d="M251.8 156.3 v5 h5.4 M254 159.7 l3.2 -3.6" stroke="#e8e8e8" stroke-width=".8" fill="none"/>
<path d="M265.2 156.3 v5 h5.4 M267.4 159.7 l3.2 -3.6" stroke="#e8e8e8" stroke-width=".8" fill="none"/>
<rect x="279.7" y="156.1" width="5.6" height="5.6" rx=".6" fill="none" stroke="#dcdcdc" stroke-width=".9" opacity="1"/>
<path d="M291 157.9 l1.7 1.7 l1.7 -1.7" stroke="#e8e8e8" stroke-width=".9" fill="none"/>
<rect x="302.6" y="156.1" width="5.6" height="5.6" rx=".6" fill="none" stroke="#dcdcdc" stroke-width=".9" opacity="1"/>
<rect x="317.4" y="156.1" width="5.6" height="5.6" rx=".6" fill="none" stroke="#dcdcdc" stroke-width=".9" opacity="1"/>
</g>
<path d="M72.3 154.4 V163.4" stroke="#4a4a4a" stroke-width=".6"/>
<path d="M112 154.4 V163.4" stroke="#4a4a4a" stroke-width=".6"/>
<path d="M140.7 154.4 V163.4" stroke="#4a4a4a" stroke-width=".6"/>
<path d="M193.5 154.4 V163.4" stroke="#4a4a4a" stroke-width=".6"/>
<path d="M233.6 154.4 V163.4" stroke="#4a4a4a" stroke-width=".6"/>
<path d="M263.6 154.4 V163.4" stroke="#4a4a4a" stroke-width=".6"/>
<path d="M299 154.4 V163.4" stroke="#4a4a4a" stroke-width=".6"/>
<path d="M313.6 154.4 V163.4" stroke="#4a4a4a" stroke-width=".6"/>
<g opacity=".85">
<circle cx="16.4" cy="174.7" r="2.3" fill="none" stroke="#dcdcdc" stroke-width=".9"/><path d="M18 176.4 l2 2.2" stroke="#dcdcdc" stroke-width=".9"/>
<path d="M14.6 187.3 v-3.4 h1.1 v-1 h1.1 v-.4 h1.1 v.6 h1.1 v4.6 l-1 1.6 h-2.6z" fill="#dcdcdc"/>
<path d="M14 199.5 l5.6 -5.6 l.9 .9 l-5.6 5.6 l-1.4 .5z" fill="#e0e0e0"/>
<path d="M17 204.7 v7 M13.5 208.2 h7" stroke="#dcdcdc" stroke-width=".9"/>
<rect x="14.2" y="216.5" width="5.6" height="5.6" fill="none" stroke="#9a9a9a" stroke-width=".8"/>
<path d="M14 233.4 l3 -5.4 l3 5.4z" fill="#dcdcdc"/>
<circle cx="16.4" cy="241.4" r="2.3" fill="none" stroke="#dcdcdc" stroke-width=".9"/><path d="M18 243.1 l2 2.2" stroke="#dcdcdc" stroke-width=".9"/>
<path d="M14.6 254.4 v-3.4 h1.1 v-1 h1.1 v-.4 h1.1 v.6 h1.1 v4.6 l-1 1.6 h-2.6z" fill="#dcdcdc"/>
<rect x="11.5" y="260.3" width="11" height="9.6" fill="#7d8bab" />
<path d="M14 267.2 l5.6 -5.6 l.9 .9 l-5.6 5.6 l-1.4 .5z" fill="#e0e0e0"/>
<path d="M17 271.7 v7 M13.5 275.2 h7" stroke="#dcdcdc" stroke-width=".9"/>
<rect x="14.2" y="283.6" width="5.6" height="5.6" fill="none" stroke="#9a9a9a" stroke-width=".8"/>
<path d="M14 300.1 l3 -5.4 l3 5.4z" fill="#dcdcdc"/>
<circle cx="16.4" cy="308.4" r="2.3" fill="none" stroke="#dcdcdc" stroke-width=".9"/><path d="M18 310.1 l2 2.2" stroke="#dcdcdc" stroke-width=".9"/>
<path d="M14.6 321 v-3.4 h1.1 v-1 h1.1 v-.4 h1.1 v.6 h1.1 v4.6 l-1 1.6 h-2.6z" fill="#dcdcdc"/>
<path d="M14 334.6 l5.6 -5.6 l.9 .9 l-5.6 5.6 l-1.4 .5z" fill="#e0e0e0"/>
<path d="M17 339.5 v7 M13.5 343 h7" stroke="#dcdcdc" stroke-width=".9"/>
<rect x="14.2" y="351.2" width="5.6" height="5.6" fill="none" stroke="#9a9a9a" stroke-width=".8"/>
<path d="M14 367.8 l3 -5.4 l3 5.4z" fill="#dcdcdc"/>
</g>
<rect x="22.6" y="210" width="2.1" height="118" fill="#686868" />
<rect x="16.7" y="378.1" width="7.3" height="7.3" fill="#ffffff" />
<rect x="11.4" y="373.6" width="7.6" height="7.6" fill="#000000" stroke="#7c98d8" stroke-width=".9"/>
<path d="M11.6 390.6 l1.1 -1.8 l1.1 1.8 l1.1 -1.8 l1.1 1.8 l1.1 -1.8 l1.1 1.8 l1.1 -1.8 l1.1 1.8 l1.1 -1.8 l1.1 1.8 l1.1 -1.8" stroke="#f0f0f0" stroke-width=".9" fill="none"/>
<path d="M448.5 146 h3 M454 141.5 h3.3 v3.3 h-3.3z M461 141.5 l3 3.3 m0 -3.3 l-3 3.3" stroke="#b0b0b0" stroke-width=".7" fill="none"/>
<path d="M32 175.6 H334" stroke="#e0e0e0" stroke-width="1.8" stroke-dasharray=".5 2.1" opacity=".7"/><path d="M36 173.6 H334" stroke="#333" stroke-width="2.2" stroke-dasharray="6.5 6.4" opacity=".45"/>
<path d="M29.6 178 V387" stroke="#e0e0e0" stroke-width="1.6" stroke-dasharray=".5 2.1" opacity=".7"/><path d="M27.4 182 V387" stroke="#333" stroke-width="2" stroke-dasharray="6.5 6.4" opacity=".4"/>
<rect x="139.3" y="227.5" width="116.6" height="142.5" fill="none" stroke="#1fb4d8" stroke-width="1.3"/>
<rect x="10.5" y="136.5" width="456" height="257" fill="none" stroke="#fa2c2c" stroke-width="1.15"/>
<rect x="467" y="137" width="456.3" height="256.5" fill="#f0f0f1" />
<rect x="467" y="137" width="456.3" height="8.3" fill="#f8d556" />
<rect x="467.6" y="138" width="6" height="6" fill="#ffffff" rx="1.5"/>
<rect x="476.7" y="138.8" width="3.6" height="3.8" fill="#dcdcdc" rx=".8"/>
<rect x="481.7" y="139.9" width="8.4" height="1.9" fill="#7a6a2a" opacity=".6"/>
<rect x="493" y="139.2" width="0.5" height="3.4" fill="#b89a30" opacity=".7"/>
<rect x="496.53" y="138.8" width="3.6" height="3.8" fill="#6a6a3a" rx=".8"/>
<rect x="501.53" y="139.9" width="8.4" height="1.9" fill="#7a6a2a" opacity=".6"/>
<rect x="512.83" y="139.2" width="0.5" height="3.4" fill="#b89a30" opacity=".7"/>
<rect x="516.36" y="138.8" width="3.6" height="3.8" fill="#3a78d8" rx=".8"/>
<rect x="521.36" y="139.9" width="8.4" height="1.9" fill="#7a6a2a" opacity=".6"/>
<rect x="532.66" y="139.2" width="0.5" height="3.4" fill="#b89a30" opacity=".7"/>
<rect x="536.19" y="138.8" width="3.6" height="3.8" fill="#3a78d8" rx=".8"/>
<rect x="541.19" y="139.9" width="8.4" height="1.9" fill="#7a6a2a" opacity=".6"/>
<rect x="552.49" y="139.2" width="0.5" height="3.4" fill="#b89a30" opacity=".7"/>
<rect x="556.02" y="138.8" width="3.6" height="3.8" fill="#3a9a3a" rx=".8"/>
<rect x="561.02" y="139.9" width="8.4" height="1.9" fill="#7a6a2a" opacity=".6"/>
<rect x="572.32" y="139.2" width="0.5" height="3.4" fill="#b89a30" opacity=".7"/>
<rect x="575.85" y="138.8" width="3.6" height="3.8" fill="#111" rx=".8"/>
<rect x="580.85" y="139.9" width="8.4" height="1.9" fill="#7a6a2a" opacity=".6"/>
<rect x="592.15" y="139.2" width="0.5" height="3.4" fill="#b89a30" opacity=".7"/>
<rect x="595.68" y="138.8" width="3.6" height="3.8" fill="#111" rx=".8"/>
<rect x="600.68" y="139.9" width="8.4" height="1.9" fill="#7a6a2a" opacity=".6"/>
<rect x="611.98" y="139.2" width="0.5" height="3.4" fill="#b89a30" opacity=".7"/>
<rect x="615.51" y="138.8" width="3.6" height="3.8" fill="#2aa0e8" rx=".8"/>
<rect x="620.51" y="139.9" width="8.4" height="1.9" fill="#7a6a2a" opacity=".6"/>
<rect x="633.14" y="137.8" width="17" height="7.6" fill="#ffffff" rx="1.5"/>
<rect x="635.74" y="139.3" width="3" height="3" fill="#b8b8b8" rx=".6"/>
<rect x="640.34" y="139.9" width="3.4" height="1.8" fill="#444" />
<rect x="645.94" y="139.9" width="2" height="1.8" fill="#555" />
<rect x="655.17" y="138.8" width="3.6" height="3.8" fill="#8ac040" rx=".8"/>
<rect x="660.17" y="139.9" width="8.4" height="1.9" fill="#7a6a2a" opacity=".6"/>
<rect x="671.47" y="139.2" width="0.5" height="3.4" fill="#b89a30" opacity=".7"/>
<rect x="675" y="138.8" width="3.6" height="3.8" fill="#e8a030" rx=".8"/>
<rect x="680" y="139.9" width="8.4" height="1.9" fill="#7a6a2a" opacity=".6"/>
<rect x="691.3" y="139.2" width="0.5" height="3.4" fill="#b89a30" opacity=".7"/>
<rect x="694.83" y="138.8" width="3.6" height="3.8" fill="#2aa0e8" rx=".8"/>
<rect x="699.83" y="139.9" width="8.4" height="1.9" fill="#7a6a2a" opacity=".6"/>
<rect x="711.13" y="139.2" width="0.5" height="3.4" fill="#b89a30" opacity=".7"/>
<rect x="714.66" y="138.8" width="3.6" height="3.8" fill="#2aa0e8" rx=".8"/>
<rect x="719.66" y="139.9" width="8.4" height="1.9" fill="#7a6a2a" opacity=".6"/>
<rect x="730.96" y="139.2" width="0.5" height="3.4" fill="#b89a30" opacity=".7"/>
<rect x="734.49" y="138.8" width="3.6" height="3.8" fill="#777" rx=".8"/>
<rect x="739.49" y="139.9" width="8.4" height="1.9" fill="#7a6a2a" opacity=".6"/>
<rect x="750.79" y="139.2" width="0.5" height="3.4" fill="#b89a30" opacity=".7"/>
<rect x="754.32" y="138.8" width="3.6" height="3.8" fill="#e03030" rx=".8"/>
<rect x="759.32" y="139.9" width="8.4" height="1.9" fill="#7a6a2a" opacity=".6"/>
<rect x="770.62" y="139.2" width="0.5" height="3.4" fill="#b89a30" opacity=".7"/>
<rect x="774.15" y="138.8" width="3.6" height="3.8" fill="#8ac040" rx=".8"/>
<rect x="779.15" y="139.9" width="8.4" height="1.9" fill="#7a6a2a" opacity=".6"/>
<rect x="790.45" y="139.2" width="0.5" height="3.4" fill="#b89a30" opacity=".7"/>
<rect x="793.98" y="138.8" width="3.6" height="3.8" fill="#20a8d8" rx=".8"/>
<rect x="798.98" y="139.9" width="8.4" height="1.9" fill="#7a6a2a" opacity=".6"/>
<rect x="810.28" y="139.2" width="0.5" height="3.4" fill="#b89a30" opacity=".7"/>
<rect x="813.81" y="138.8" width="3.6" height="3.8" fill="#8ac040" rx=".8"/>
<rect x="818.81" y="139.9" width="8.4" height="1.9" fill="#7a6a2a" opacity=".6"/>
<rect x="830.11" y="139.2" width="0.5" height="3.4" fill="#b89a30" opacity=".7"/>
<rect x="833.64" y="138.8" width="3.6" height="3.8" fill="#8ac040" rx=".8"/>
<rect x="838.64" y="139.9" width="8.4" height="1.9" fill="#7a6a2a" opacity=".6"/>
<rect x="849.94" y="139.2" width="0.5" height="3.4" fill="#b89a30" opacity=".7"/>
<rect x="853.47" y="138.8" width="3.6" height="3.8" fill="#4a8af0" rx=".8"/>
<rect x="858.47" y="139.9" width="8.4" height="1.9" fill="#7a6a2a" opacity=".6"/>
<rect x="869.77" y="139.2" width="0.5" height="3.4" fill="#b89a30" opacity=".7"/>
<rect x="872.6" y="140.6" width="3" height="0.6" fill="#6a5a20" />
<rect x="873.8" y="139.4" width="0.6" height="3" fill="#6a5a20" />
<path d="M894 141 h2.5 M905.5 139.6 h2.6 v2.6 h-2.6z M916 139.6 l2.6 2.8 m0 -2.8 l-2.6 2.8" stroke="#7a6a2a" stroke-width=".6" fill="none"/>
<rect x="467" y="145.2" width="456.3" height="19" fill="#ffffff" />
<rect x="504.4" y="147.6" width="359.5" height="6.8" fill="#eff1f2" rx="3.4"/>
<circle cx="471.5" cy="151" r="1.5" fill="none" stroke="#555" stroke-width=".7"/>
<circle cx="480" cy="151" r="1.5" fill="none" stroke="#555" stroke-width=".7"/>
<circle cx="488.5" cy="151" r="1.5" fill="none" stroke="#555" stroke-width=".7"/>
<circle cx="496.5" cy="151" r="1.5" fill="none" stroke="#555" stroke-width=".7"/>
<text x="511.9" y="152.9" font-size="3.7" fill="#2a2a2a" textLength="83" lengthAdjust="spacingAndGlyphs">irasutunopeito.com/wp-admin/edit.php?post_type=post</text>
<rect x="869.5" y="149.2" width="3.4" height="3.6" fill="#3a6ad8" rx=".8"/>
<rect x="878" y="149.2" width="3.4" height="3.6" fill="#e86a6a" rx=".8"/>
<rect x="887" y="149.2" width="3.4" height="3.6" fill="#c89030" rx=".8"/>
<rect x="896" y="149.2" width="3.4" height="3.6" fill="#444" rx=".8"/>
<circle cx="909" cy="151" r="2.3" fill="#6a3ab8"/>
<rect x="479.9" y="158.2" width="3.2" height="3.3" fill="#3a78d8" rx=".7" opacity=".9"/>
<rect x="484.8" y="159.1" width="13.8" height="1.7" fill="#444" opacity=".55"/>
<rect x="503.2" y="158.2" width="3.2" height="3.3" fill="#18b018" rx=".7" opacity=".9"/>
<rect x="508" y="159.1" width="22.7" height="1.7" fill="#444" opacity=".55"/>
<rect x="534.6" y="158.2" width="3.2" height="3.3" fill="#e01010" rx=".7" opacity=".9"/>
<rect x="540" y="159.1" width="28.8" height="1.7" fill="#444" opacity=".55"/>
<rect x="571" y="158.2" width="3.2" height="3.3" fill="#777" rx=".7" opacity=".9"/>
<rect x="576.3" y="159.1" width="12.5" height="1.7" fill="#444" opacity=".55"/>
<rect x="590.4" y="158.2" width="3.2" height="3.3" fill="#777" rx=".7" opacity=".9"/>
<rect x="595" y="159.1" width="8.8" height="1.7" fill="#444" opacity=".55"/>
<rect x="606.4" y="158.2" width="3.2" height="3.3" fill="#111" rx=".7" opacity=".9"/>
<rect x="611.4" y="159.1" width="8.6" height="1.7" fill="#444" opacity=".55"/>
<rect x="623.4" y="158.2" width="3.2" height="3.3" fill="#e88a20" rx=".7" opacity=".9"/>
<rect x="629" y="159.1" width="15.5" height="1.7" fill="#444" opacity=".55"/>
<rect x="648.4" y="158.2" width="3.2" height="3.3" fill="#7890c8" rx=".7" opacity=".9"/>
<rect x="653.5" y="159.1" width="9.2" height="1.7" fill="#444" opacity=".55"/>
<rect x="665.4" y="158.2" width="3.2" height="3.3" fill="#444" rx=".7" opacity=".9"/>
<rect x="671.5" y="159.1" width="25.1" height="1.7" fill="#444" opacity=".55"/>
<rect x="700" y="158.2" width="3.2" height="3.3" fill="#e03030" rx=".7" opacity=".9"/>
<rect x="706" y="159.1" width="26" height="1.7" fill="#444" opacity=".55"/>
<rect x="741.4" y="158.2" width="3.2" height="3.3" fill="#e83a8a" rx=".7" opacity=".9"/>
<rect x="747" y="159.1" width="16" height="1.7" fill="#444" opacity=".55"/>
<rect x="765.4" y="158.2" width="3.2" height="3.3" fill="#888" rx=".7" opacity=".9"/>
<rect x="769.5" y="159.1" width="11.5" height="1.7" fill="#444" opacity=".55"/>
<rect x="786.4" y="158.2" width="3.2" height="3.3" fill="#222" rx=".7" opacity=".9"/>
<rect x="792" y="159.1" width="16" height="1.7" fill="#444" opacity=".55"/>
<rect x="812.4" y="158.2" width="3.2" height="3.3" fill="#222" rx=".7" opacity=".9"/>
<rect x="817.3" y="159.1" width="26.2" height="1.7" fill="#444" opacity=".55"/>
<rect x="848.4" y="158.2" width="3.2" height="3.3" fill="#222" rx=".7" opacity=".9"/>
<rect x="853.6" y="159.1" width="26.2" height="1.7" fill="#444" opacity=".55"/>
<rect x="476.6" y="157.6" width="0.5" height="4.6" fill="#e8b030" />
<rect x="913.2" y="159.2" width="2.4" height="1.4" fill="#555" opacity=".7"/>
<rect x="470" y="158" width="4.6" height="4.2" fill="#444" opacity=".85"/>
<rect x="467" y="164.2" width="452.6" height="8.2" fill="#5c7f8d" />
<rect x="467" y="172.4" width="7.2" height="213.4" fill="#5c7f8d" />
<rect x="467" y="194.3" width="7.2" height="8.4" fill="#97b894" />
<circle cx="470.7" cy="179" r="1.5" fill="#f4f6f8"/>
<circle cx="470.7" cy="187" r="1.5" fill="#f4f6f8"/>
<circle cx="470.7" cy="198.5" r="1.5" fill="#f4f6f8"/>
<circle cx="470.7" cy="206" r="1.5" fill="#f4f6f8"/>
<circle cx="470.7" cy="214" r="1.5" fill="#f4f6f8"/>
<circle cx="470.7" cy="222" r="1.5" fill="#f4f6f8"/>
<circle cx="470.7" cy="230" r="1.5" fill="#f4f6f8"/>
<circle cx="470.7" cy="238.5" r="1.5" fill="#f4f6f8"/>
<circle cx="470.7" cy="246" r="1.5" fill="#f4f6f8"/>
<circle cx="470.7" cy="254" r="1.5" fill="#f4f6f8"/>
<circle cx="470.7" cy="262" r="1.5" fill="#f4f6f8"/>
<circle cx="470.7" cy="270.5" r="1.5" fill="#f4f6f8"/>
<circle cx="470.7" cy="281.5" r="1.5" fill="#f4f6f8"/>
<circle cx="470.7" cy="289.5" r="1.5" fill="#f4f6f8"/>
<circle cx="470.7" cy="297.5" r="1.5" fill="#f4f6f8"/>
<circle cx="470.7" cy="305.5" r="1.5" fill="#f4f6f8"/>
<circle cx="470.7" cy="313.5" r="1.5" fill="#f4f6f8"/>
<circle cx="470.7" cy="321.5" r="1.5" fill="#f4f6f8"/>
<circle cx="470.7" cy="329.5" r="1.5" fill="#f4f6f8"/>
<circle cx="470.7" cy="339.5" r="1.5" fill="#f4f6f8"/>
<circle cx="470.7" cy="347.5" r="1.5" fill="#f4f6f8"/>
<circle cx="470.7" cy="355.5" r="1.5" fill="#f4f6f8"/>
<circle cx="470.7" cy="363.5" r="1.5" fill="#f4f6f8"/>
<circle cx="470.7" cy="371.5" r="1.5" fill="#f4f6f8"/>
<text x="480" y="170.4" font-size="3.6" fill="#f4f8fa" textLength="127" lengthAdjust="spacingAndGlyphs" font-weight="bold">サイトのすすむ。　⟳ 11　■ 0　＋ 新規　投稿一覧を表示　／ カスタマイズ　◢ Rinker設定　WPForms</text>
<circle cx="470.6" cy="168.3" r="2" fill="none" stroke="#e8eef0" stroke-width=".8"/>
<text x="861" y="170.3" font-size="3.5" fill="#f0f4f6" textLength="51" lengthAdjust="spacingAndGlyphs">こんにちは、しんさつなペイト さん</text>
<rect x="914" y="166" width="3.6" height="4.4" fill="#e8e8e8" />
<rect x="919.5" y="164.2" width="3.8" height="221.6" fill="#fafafa" />
<rect x="920.6" y="169" width="2.2" height="93" fill="#606060" rx="1"/>
<rect x="914.6" y="172.4" width="4.9" height="213.4" fill="#ececec" />
<text x="480" y="183" font-size="5.4" fill="#1d2327" font-weight="bold">投稿</text>
<rect x="493.4" y="177.4" width="20" height="7" fill="#f6f7f7" stroke="#2271b1" stroke-width=".6" rx=".8"/>
<text x="496" y="182.6" font-size="3.6" fill="#2271b1" >新規追加</text>
<rect x="859.6" y="172.4" width="32.4" height="7" fill="#ffffff" stroke="#c8c8c8" stroke-width=".4"/>
<rect x="894.4" y="172.4" width="20.2" height="7" fill="#ffffff" stroke="#c8c8c8" stroke-width=".4"/>
<text x="863" y="177.4" font-size="3.3" fill="#50575e" >表示オプション ▾</text>
<text x="898.5" y="177.4" font-size="3.3" fill="#50575e" >ヘルプ ▾</text>
<rect x="849.6" y="187.4" width="42" height="7" fill="#ffffff" stroke="#8c8f94" stroke-width=".5" rx=".8"/>
<rect x="894.4" y="187.4" width="20.2" height="7" fill="#f6f7f7" stroke="#8c8f94" stroke-width=".5" rx=".8"/>
<text x="896.6" y="192.4" font-size="3.2" fill="#2c3338" >投稿を検索</text>
<text x="480" y="191.4" font-size="3.6" fill="#2271b1" textLength="77" lengthAdjust="spacingAndGlyphs">すべて (177) | 公開済み (171) | 下書き (70) | ゴミ箱 (7)</text>
<rect x="480" y="198.8" width="28" height="6.8" fill="#ffffff" stroke="#8c8f94" stroke-width=".5" rx=".8"/>
<rect x="482" y="201.4" width="15.4" height="1.7" fill="#666" opacity=".8"/>
<rect x="510" y="198.8" width="11" height="6.8" fill="#ffffff" stroke="#8c8f94" stroke-width=".5" rx=".8"/>
<rect x="512" y="201.4" width="6.05" height="1.7" fill="#666" opacity=".8"/>
<rect x="525" y="198.8" width="28.5" height="6.8" fill="#ffffff" stroke="#8c8f94" stroke-width=".5" rx=".8"/>
<rect x="527" y="201.4" width="15.675" height="1.7" fill="#666" opacity=".8"/>
<rect x="555" y="198.8" width="28" height="6.8" fill="#ffffff" stroke="#8c8f94" stroke-width=".5" rx=".8"/>
<rect x="557" y="201.4" width="15.4" height="1.7" fill="#666" opacity=".8"/>
<text x="842" y="203.6" font-size="3.2" fill="#50575e" >177個の項目</text>
<rect x="862.5" y="198.8" width="6.4" height="6.8" fill="#f6f7f7" stroke="#a8acb0" stroke-width=".5" rx=".8"/>
<rect x="870.5" y="198.8" width="6.4" height="6.8" fill="#f6f7f7" stroke="#a8acb0" stroke-width=".5" rx=".8"/>
<rect x="899.6" y="198.8" width="6.4" height="6.8" fill="#f6f7f7" stroke="#a8acb0" stroke-width=".5" rx=".8"/>
<rect x="907.9" y="198.8" width="6.4" height="6.8" fill="#f6f7f7" stroke="#a8acb0" stroke-width=".5" rx=".8"/>
<rect x="878.6" y="198.8" width="13" height="6.8" fill="#ffffff" stroke="#8c8f94" stroke-width=".5" rx=".8"/>
<text x="884" y="203.8" font-size="3.4" fill="#333" >1</text>
<text x="893.6" y="203.8" font-size="3.2" fill="#50575e" >/ 17</text>
<rect x="479.8" y="208.6" width="434.7" height="177.2" fill="#ffffff" stroke="#c3c4c7" stroke-width=".5"/>
<rect x="480.1" y="216" width="434.1" height="28" fill="#f6f7f7" />
<rect x="480.1" y="244" width="434.1" height="20" fill="#ffffff" />
<rect x="480.1" y="264" width="434.1" height="24.6" fill="#f6f7f7" />
<rect x="480.1" y="288.6" width="434.1" height="19.4" fill="#ffffff" />
<rect x="480.1" y="308" width="434.1" height="24.5" fill="#f6f7f7" />
<rect x="480.1" y="332.5" width="434.1" height="24.2" fill="#ffffff" />
<rect x="480.1" y="356.7" width="434.1" height="24.3" fill="#f6f7f7" />
<rect x="480.1" y="381" width="434.1" height="4.8" fill="#ffffff" />
<path d="M479.8 216 H914.5" stroke="#c3c4c7" stroke-width=".5"/>
<text x="490.5" y="214" font-size="3.5" fill="#2271b1" >タイトル ⇕</text>
<text x="558.5" y="214" font-size="3.4" fill="#3c434a" >投稿者</text>
<text x="821" y="214" font-size="3.4" fill="#3c434a" >アイキャッチ</text>
<text x="854" y="214" font-size="3.4" fill="#3c434a" >PR表記</text>
<text x="876" y="214" font-size="3.4" fill="#3c434a" >ID</text>
<text x="893.5" y="214" font-size="3.4" fill="#2271b1" >PV ⇕</text>
<rect x="907.5" y="210.6" width="4" height="3.6" fill="#333" />
<rect x="482.6" y="218.5" width="4" height="4" rx=".8" fill="#fff" stroke="#8c8f94" stroke-width=".5"/>
<text x="490.6" y="222.1" font-size="3.35" fill="#2271b1" font-weight="bold">【PR】デジタル×アナログガジェット！</text>
<text x="490.6" y="226.8" font-size="3.35" fill="#2271b1" font-weight="bold">Huion Noteをアナログ絵描きが使ってみ</text>
<text x="490.6" y="231.5" font-size="3.35" fill="#2271b1" font-weight="bold">たよ ― 下書き</text>
<text x="558.6" y="222.1" font-size="3.5" fill="#2271b1" >しんさつなペイト</text>
<text x="876" y="222" font-size="3.2" fill="#50575e" >3766</text>
<text x="893.6" y="222" font-size="3.2" fill="#50575e" >0</text>
<text x="854.5" y="222" font-size="3.2" fill="#777" >―</text>
<rect x="482.6" y="246.5" width="4" height="4" rx=".8" fill="#fff" stroke="#8c8f94" stroke-width=".5"/>
<text x="490.6" y="250.1" font-size="3.35" fill="#2271b1" font-weight="bold">X投稿用 ― 下書き</text>
<text x="558.6" y="250.1" font-size="3.5" fill="#2271b1" >しんさつなペイト</text>
<text x="876" y="250" font-size="3.2" fill="#50575e" >3766</text>
<text x="893.6" y="250" font-size="3.2" fill="#50575e" >0</text>
<text x="854.5" y="250" font-size="3.2" fill="#777" >―</text>
<rect x="482.6" y="266.5" width="4" height="4" rx=".8" fill="#fff" stroke="#8c8f94" stroke-width=".5"/>
<text x="490.6" y="270.1" font-size="3.35" fill="#2271b1" font-weight="bold">【絵の魅力がワンランクアップ！】水彩</text>
<text x="490.6" y="274.8" font-size="3.35" fill="#2271b1" font-weight="bold">イラスト向け・イラストの情報量を増や</text>
<text x="490.6" y="279.5" font-size="3.35" fill="#2271b1" font-weight="bold">す小技集</text>
<text x="558.6" y="270.1" font-size="3.5" fill="#2271b1" >しんさつなペイト</text>
<text x="876" y="270" font-size="3.2" fill="#50575e" >3766</text>
<text x="893.6" y="270" font-size="3.2" fill="#50575e" >0</text>
<text x="854.5" y="270" font-size="3.2" fill="#777" >―</text>
<rect x="482.6" y="291.1" width="4" height="4" rx=".8" fill="#fff" stroke="#8c8f94" stroke-width=".5"/>
<text x="490.6" y="294.7" font-size="3.35" fill="#2271b1" font-weight="bold">絵師 雪 レビューするよ ― 下書き</text>
<text x="558.6" y="294.7" font-size="3.5" fill="#2271b1" >しんさつなペイト</text>
<text x="876" y="294.6" font-size="3.2" fill="#50575e" >3766</text>
<text x="893.6" y="294.6" font-size="3.2" fill="#50575e" >0</text>
<text x="854.5" y="294.6" font-size="3.2" fill="#777" >―</text>
<rect x="482.6" y="310.5" width="4" height="4" rx=".8" fill="#fff" stroke="#8c8f94" stroke-width=".5"/>
<text x="490.6" y="314.1" font-size="3.35" fill="#2271b1" font-weight="bold">【イラストをもっと魅力的に！】今まで</text>
<text x="490.6" y="318.8" font-size="3.35" fill="#2271b1" font-weight="bold">やった面白作品を紹介するよ</text>
<text x="558.6" y="314.1" font-size="3.5" fill="#2271b1" >しんさつなペイト</text>
<text x="876" y="314" font-size="3.2" fill="#50575e" >3766</text>
<text x="893.6" y="314" font-size="3.2" fill="#50575e" >0</text>
<text x="854.5" y="314" font-size="3.2" fill="#777" >―</text>
<rect x="482.6" y="335" width="4" height="4" rx=".8" fill="#fff" stroke="#8c8f94" stroke-width=".5"/>
<text x="490.6" y="338.6" font-size="3.35" fill="#2271b1" font-weight="bold">【厨ニジゲ！】ホルベイン山吹色！ナイト</text>
<text x="490.6" y="343.3" font-size="3.35" fill="#2271b1" font-weight="bold">フォールカラーズ レビューするよ</text>
<text x="558.6" y="338.6" font-size="3.5" fill="#2271b1" >しんさつなペイト</text>
<text x="876" y="338.5" font-size="3.2" fill="#50575e" >3766</text>
<text x="893.6" y="338.5" font-size="3.2" fill="#50575e" >0</text>
<text x="854.5" y="338.5" font-size="3.2" fill="#777" >―</text>
<rect x="482.6" y="359.2" width="4" height="4" rx=".8" fill="#fff" stroke="#8c8f94" stroke-width=".5"/>
<text x="490.6" y="362.8" font-size="3.35" fill="#2271b1" font-weight="bold">【デッサン人形の代わりになるか！！】</text>
<text x="490.6" y="367.5" font-size="3.35" fill="#2271b1" font-weight="bold">セリアの韓国フィギュア、レビューするよ</text>
<text x="558.6" y="362.8" font-size="3.5" fill="#2271b1" >しんさつなペイト</text>
<text x="876" y="362.7" font-size="3.2" fill="#50575e" >3766</text>
<text x="893.6" y="362.7" font-size="3.2" fill="#50575e" >0</text>
<text x="854.5" y="362.7" font-size="3.2" fill="#777" >―</text>
<rect x="482.6" y="383.5" width="4" height="4" rx=".8" fill="#fff" stroke="#8c8f94" stroke-width=".5"/>
<path d="M907.8 219.6 l2.4 2.4 m0 -2.4 l-2.4 2.4" stroke="#f0a030" stroke-width=".8"/>
<path d="M907.8 247.6 l2.4 2.4 m0 -2.4 l-2.4 2.4" stroke="#f0a030" stroke-width=".8"/>
<path d="M908 269 l.9 1 l1.6 -2.4" stroke="#18a018" stroke-width=".9" fill="none"/>
<path d="M907.8 292.2 l2.4 2.4 m0 -2.4 l-2.4 2.4" stroke="#f0a030" stroke-width=".8"/>
<path d="M908 313 l.9 1 l1.6 -2.4" stroke="#18a018" stroke-width=".9" fill="none"/>
<path d="M908 337.5 l.9 1 l1.6 -2.4" stroke="#18a018" stroke-width=".9" fill="none"/>
<path d="M908 361.7 l.9 1 l1.6 -2.4" stroke="#18a018" stroke-width=".9" fill="none"/>
<rect x="821" y="218.6" width="29" height="15" fill="#e6ddd0" />
<rect x="834.5" y="221" width="5" height="10.4" fill="#6a5a8a" />
<rect x="823" y="220.6" width="9.5" height="6" fill="#f4efe6" />
<rect x="841.5" y="222" width="7" height="10" fill="#d8cfc0" />
<rect x="821" y="266" width="29" height="15" fill="#d4d0c8" />
<rect x="824" y="269" width="23" height="9" fill="#e6e2da" />
<rect x="832" y="276.5" width="7" height="1.4" fill="#6a2a2a" />
<rect x="821" y="310.8" width="29" height="13.4" fill="#f6efec" />
<rect x="823" y="312.6" width="9.6" height="10" fill="#c4ccd0" />
<rect x="835.5" y="314.4" width="12.6" height="1" fill="#e07888" />
<rect x="835.5" y="316.8" width="12.6" height="1" fill="#e07888" />
<rect x="835.5" y="319.2" width="12.6" height="1" fill="#e07888" />
<rect x="821" y="334" width="4.84" height="15.6" fill="#8a4a6a" />
<rect x="825.84" y="334" width="4.84" height="15.6" fill="#c8b848" />
<rect x="830.68" y="334" width="4.84" height="15.6" fill="#5a9a5a" />
<rect x="835.52" y="334" width="4.84" height="15.6" fill="#4a98a8" />
<rect x="840.36" y="334" width="4.84" height="15.6" fill="#5a6ab8" />
<rect x="845.2" y="334" width="4.84" height="15.6" fill="#8a5a9a" />
<rect x="821" y="339.5" width="29" height="3" fill="#e8e4e8" opacity=".55"/>
<rect x="821" y="359" width="29" height="15" fill="#aaa69e" stroke="#333" stroke-width=".6"/>
<rect x="824" y="361.5" width="10" height="6" fill="#c4c0b8" />
<rect x="836" y="364" width="11" height="7" fill="#8e8a82" />
<rect x="821" y="383" width="10" height="2.8" fill="#b0c4a0" />
<rect x="831" y="383" width="9" height="2.8" fill="#d8d0e8" />
<rect x="840" y="383" width="10" height="2.8" fill="#b8b0d8" />
<text x="606.5" y="363" font-size="3.4" fill="#2271b1" >黒田佳船</text>
<text x="674" y="363" font-size="3.4" fill="#2271b1" >デッサン人形</text>
<text x="741" y="363" font-size="3.4" fill="#777" >—</text>
<text x="760" y="362.4" font-size="3.2" fill="#50575e" >公開済み</text>
<text x="760" y="366.8" font-size="3.2" fill="#50575e" >2023年10月6日 3:05 AM</text>
<text x="490.6" y="387.4" font-size="3.35" fill="#2271b1" font-weight="bold">ペイントのフォルダー【ARTnote】</text>
<text x="558.6" y="387.4" font-size="3.5" fill="#2271b1" >しんさつなペイト</text>
<text x="606.5" y="387.4" font-size="3.4" fill="#2271b1" >ARTnote、作品</text>
<text x="674" y="387.4" font-size="3.4" fill="#2271b1" >ナイトフォールカラーズ</text>
<text x="760" y="387.2" font-size="3.2" fill="#50575e" >公開済み</text>
<rect x="821" y="236.6" width="2.4" height="0.5" fill="#666" />
<rect x="821" y="284" width="2.4" height="0.5" fill="#666" />
<rect x="821" y="327" width="2.4" height="0.5" fill="#666" />
<rect x="821" y="352" width="2.4" height="0.5" fill="#666" />
<rect x="821" y="377" width="2.4" height="0.5" fill="#666" />
<rect x="821" y="250" width="2.4" height="0.5" fill="#666" />
<rect x="821" y="256" width="2.4" height="0.5" fill="#666" />
<rect x="821" y="293.6" width="2.4" height="0.5" fill="#666" />
<rect x="821" y="299.6" width="2.4" height="0.5" fill="#666" />
<rect x="467" y="385.8" width="456.3" height="7.7" fill="#4b4b4b" />
<rect x="583.2" y="186.8" width="223" height="154.8" fill="#1e1e1e" />
<rect x="583.2" y="332.6" width="223" height="9" fill="#181818" />
<defs><linearGradient id="ig" x1="0" x2="1"><stop offset="0" stop-color="#352c78"/><stop offset=".25" stop-color="#b02448"/><stop offset=".48" stop-color="#c48030"/><stop offset=".6" stop-color="#c8a030"/><stop offset=".7" stop-color="#3a98a8"/><stop offset="1" stop-color="#2a5590"/></linearGradient></defs>
<rect x="583.2" y="200.6" width="223" height="0.5" fill="url(#ig)" opacity=".8"/>
<text x="592.4" y="196.2" font-size="3.9" fill="#27b4d9" >ペンタブレット</text>
<text x="628.6" y="196.2" font-size="3.9" fill="#fff" >デジタルペン</text>
<text x="661" y="196.2" font-size="3.9" fill="#fff" >ストアー</text>
<text x="592.4" y="208.6" font-size="3.1" fill="#c8c8c8" >プレスキー</text>
<text x="640" y="208.6" font-size="3.1" fill="#fff" >作業領域</text>
<rect x="717" y="189.4" width="57.5" height="8.3" fill="#181818" rx=".8"/>
<text x="728.4" y="195.8" font-size="3.3" fill="#6a6a6a" >すべてのプログラム</text>
<path d="M719.8 191.4 h1.6 v1.6 h-1.6z m2.8 0 h1.6 v1.6 h-1.6z m-2.8 2.9 h1.6 v1.6 h-1.6z m2.8 0 h1.6 v1.6 h-1.6z" stroke="#fff" stroke-width=".5" fill="none"/>
<path d="M778.6 192.2 h4 v2.8 h-4z M787.2 193.6 m-1.7 0 a1.7 1.7 0 1 0 3.4 0 a1.7 1.7 0 1 0 -3.4 0 M791.2 193.6 h3.6 M798.2 192 l3.2 3.2 m0 -3.2 l-3.2 3.2" stroke="#fff" stroke-width=".6" fill="none"/>
<circle cx="799.8" cy="207.7" r="2.3" fill="#3c3c3c"/>
<text x="799" y="208.9" font-size="3.2" fill="#ddd" font-weight="bold">?</text>
<rect x="623" y="217" width="143" height="102" fill="#c6834f" rx="1.8"/>
<rect x="623.5" y="217" width="142" height="1" fill="#d49566" rx="1"/>
<rect x="627.2" y="224.1" width="126.8" height="1.5" fill="#a66839" />
<rect x="764.2" y="227.6" width="1.9" height="10.8" fill="#4a3a2e" rx=".6"/>
<rect x="758.2" y="228.8" width="1" height="10.4" fill="#b07040" opacity=".8"/>
<circle cx="758.6" cy="308.6" r=".7" fill="#fff"/><circle cx="758.2" cy="302" r="2" fill="none" stroke="#b4733f" stroke-width=".5"/>
<text x="676.4" y="339.2" font-size="3.8" fill="#f0f0f0" >Huion Note X10</text>
<path d="M672.4 336.4 l1.4 1.4 l-1.4 1.4" stroke="#eee" stroke-width=".5" fill="none"/>
<rect x="789.2" y="335.8" width="5.4" height="3" fill="#ffffff" rx=".5"/>
<rect x="794.6" y="336.6" width="0.9" height="1.4" fill="#aaa" />
<circle cx="799.4" cy="337.3" r="2.1" fill="#ffffff"/>
<rect x="415" y="410" width="102.8" height="143.9" rx="2" fill="#c5834f"/>
<rect x="415" y="410" width="2" height="143.9" rx="1" fill="#cf9060" opacity=".7"/>
<rect x="516.2" y="411" width="1.6" height="142" fill="#b87646" opacity=".8"/>
<rect x="415.5" y="552.4" width="101.8" height="1.5" fill="#b87646" opacity=".7"/>
<rect x="426.8" y="410" width="10" height="1.6" rx=".6" fill="#2a2420"/>
<rect x="422.5" y="421.8" width="1.1" height="128.4" fill="#9a6038"/>
<text x="426.2" y="418.8" font-size="3.6" fill="#a96a3e" font-weight="bold" font-family="Liberation Sans, sans-serif" textLength="12" lengthAdjust="spacingAndGlyphs">HUION</text>
<circle cx="500.8" cy="417.3" r="2.5" fill="none" stroke="#b4733f" stroke-width=".6"/>
<circle cx="507.6" cy="417.3" r=".75" fill="#ffffff"/>
<rect x="425.5" y="433.5" width="84.1" height="112" fill="none" stroke="#1fb4d8" stroke-width="1.4"/>
</svg>

<!-- header -->
<div class="t" style="left:38px;top:21px;font-size:16px;color:#22b6dc">ペンタブレット</div>
<div class="t" style="left:190px;top:21px;font-size:16px;color:#fff">デジタルペン</div>
<div class="t" style="left:325.5px;top:21px;font-size:16px;letter-spacing:.25px;color:#fff">ストアー</div>
<div class="abs" id="prog"></div>
<div class="t" style="left:607px;top:22px;font-size:14px;color:#8a8a8a">すべてのプログラム</div>

<!-- header icons -->
<svg class="abs" style="left:560px;top:10px" width="374" height="36" viewBox="560 10 374 36" fill="none" stroke="#fff">
<g stroke-width="1.5"><rect x="571.3" y="18" width="7.6" height="7" rx="1.6"/><rect x="583.9" y="18" width="7.6" height="7" rx="1.6"/><rect x="571.3" y="30.4" width="7.6" height="7" rx="1.6"/><rect x="583.9" y="30.4" width="7.6" height="7" rx="1.6"/></g>
<path d="M786.5 23.2 L780.3 28.4 L786.5 33.6" stroke="#6e6e6e" stroke-width="1.3"/>
<g stroke-width="1.2"><rect x="820.5" y="22.4" width="17" height="11"/><path d="M821 23 L829 29.2 L837 23"/></g>
<g stroke-width="1.25"><circle cx="858" cy="28" r="2.6"/>
<path stroke-linejoin="round" d="M863.54 26.67 L865.52 26.87 L865.52 29.13 L863.54 29.33 L862.86 30.98 L864.11 32.52 L862.52 34.11 L860.98 32.86 L859.33 33.54 L859.13 35.52 L856.87 35.52 L856.67 33.54 L855.02 32.86 L853.48 34.11 L851.89 32.52 L853.14 30.98 L852.46 29.33 L850.48 29.13 L850.48 26.87 L852.46 26.67 L853.14 25.02 L851.89 23.48 L853.48 21.89 L855.02 23.14 L856.67 22.46 L856.87 20.48 L859.13 20.48 L859.33 22.46 L860.98 23.14 L862.52 21.89 L864.11 23.48 L862.86 25.02 Z"/></g>
<path d="M875 28 H890" stroke-width="2.6"/>
<path d="M904 21.2 L917 34.2 M917 21.2 L904 34.2" stroke-width="1.4"/>
</svg>
<div class="abs" style="left:900px;top:75px;width:20px;height:20px;border-radius:50%;background:#333"></div>
<div class="t" style="left:900px;top:77px;width:20px;text-align:center;font-size:17px;font-weight:bold;color:#ececec;transform:scaleX(.8)">?</div>
<div class="abs" id="grad2"></div><div class="abs" id="grad"></div>
<div class="t" style="left:39px;top:76px;font-size:13px;color:#6a6a6a">プレスキー</div>
<div class="t" style="left:238px;top:76px;font-size:13px;color:#fff">作業領域</div>
<div class="abs" style="left:408px;top:104px;width:118px;height:22px;border:1px solid #7a7a7a;background:#262626"></div>
<div class="t" style="left:429px;top:109px;font-size:13.5px;color:#c8c8c8">すべての畫面</div>
<!-- footer -->
<div class="abs" id="foot"></div>
<div class="t" style="left:393px;top:621px;font-size:15.3px;color:#fff">Huion Note X10</div>
<div class="abs" style="left:36px;top:571px;width:160px;height:22px;background:#2a2a2a;border:1px solid #383838;border-radius:2px"></div>
<div class="t" style="left:41px;top:577px;font-size:12.3px;color:#9a9a9a">カスタム領域</div>
<div class="inp" style="left:242px">0.000</div>
<div class="inp" style="left:330px">1.000</div>
<div class="inp" style="left:418px">0.000</div>
<div class="inp" style="left:506px">1.000</div>
<div class="t" style="left:638px;top:577px;font-size:13px;color:#fff">回転設定</div>
<svg class="abs" style="left:0;top:560px" width="934" height="85" viewBox="0 560 934 85" fill="none"><path d="M186.2 577.4 L180.2 582.3 L186.2 587.2" stroke="#6e6e6e" stroke-width="1.3"/><rect x="216.7" y="576" width="21" height="12.4" rx="2" stroke="#b8b8b8" stroke-width="1" stroke-dasharray="3 1.8" fill="none"/><path d="M217 575.4 V588.8" stroke="#1fb4d8" stroke-width="2.2"/><rect x="304.7" y="576" width="21" height="12.4" rx="2" stroke="#b8b8b8" stroke-width="1" stroke-dasharray="3 1.8" fill="none"/><path d="M325.6 575.4 V588.8" stroke="#1fb4d8" stroke-width="2.2"/><rect x="392.7" y="576" width="21" height="12.4" rx="2" stroke="#b8b8b8" stroke-width="1" stroke-dasharray="3 1.8" fill="none"/><path d="M392.4 575.9 H414" stroke="#1fb4d8" stroke-width="2.2"/><rect x="480.7" y="576" width="21" height="12.4" rx="2" stroke="#b8b8b8" stroke-width="1" stroke-dasharray="3 1.8" fill="none"/><path d="M480.4 588.3 H502" stroke="#1fb4d8" stroke-width="2.2"/><circle cx="705.5" cy="582.8" r="6" stroke="#5a5a5a" stroke-width="1.3" fill="none"/><circle cx="748.4" cy="582.8" r="6" stroke="#5a5a5a" stroke-width="1.3" fill="none"/><circle cx="798.7" cy="582.8" r="6" stroke="#5a5a5a" stroke-width="1.3" fill="none"/><circle cx="853.7" cy="582.8" r="5.9" stroke="#1fb4d8" stroke-width="1.6" fill="none"/><circle cx="853.7" cy="582.8" r="2.6" fill="#1fb4d8"/><path d="M375.3 623 L381 628.2 L375.3 633.4" stroke="#e8e8e8" stroke-width="1.4"/><rect x="863.4" y="622.2" width="22.4" height="11.5" rx="1.6" stroke="#d0d0d0" stroke-width="1.1"/><rect x="865.3" y="623.9" width="16.2" height="8.1" rx="0.8" fill="#fff"/><rect x="886.2" y="625.3" width="3.2" height="5.2" rx="0.8" fill="#8a8a8a" stroke="#c8c8c8" stroke-width=".7"/><circle cx="908.2" cy="627.8" r="8.3" fill="#fff"/><path d="M904.6 625.2 L911.2 630.4 L908 632.8 V622.8 L911.2 625.2 L904.6 630.4" stroke="#222" stroke-width="1" stroke-linejoin="round"/></svg>
<div class="t" style="left:719px;top:575px;font-size:15px;color:#fff">0°</div><div class="t" style="left:762.5px;top:575px;font-size:15px;color:#fff">90°</div><div class="t" style="left:812.5px;top:575px;font-size:15px;color:#fff">180°</div><div class="t" style="left:867px;top:575px;font-size:15px;color:#fff">270°</div>
<svg class="abs" style="left:0;top:0;mix-blend-mode:difference" width="934" height="645" viewBox="0 0 934 645" fill="none" stroke="#ffffff" stroke-width="1" shape-rendering="crispEdges">
<path d="M139 227.3 L425.5 433.5"/>
<path d="M256.2 227.3 L509.6 433.5"/>
<path d="M138.8 370.3 L425.5 545.5"/>
<path d="M256.2 370.3 L509.6 545.5"/>
</svg>
</body></html>
